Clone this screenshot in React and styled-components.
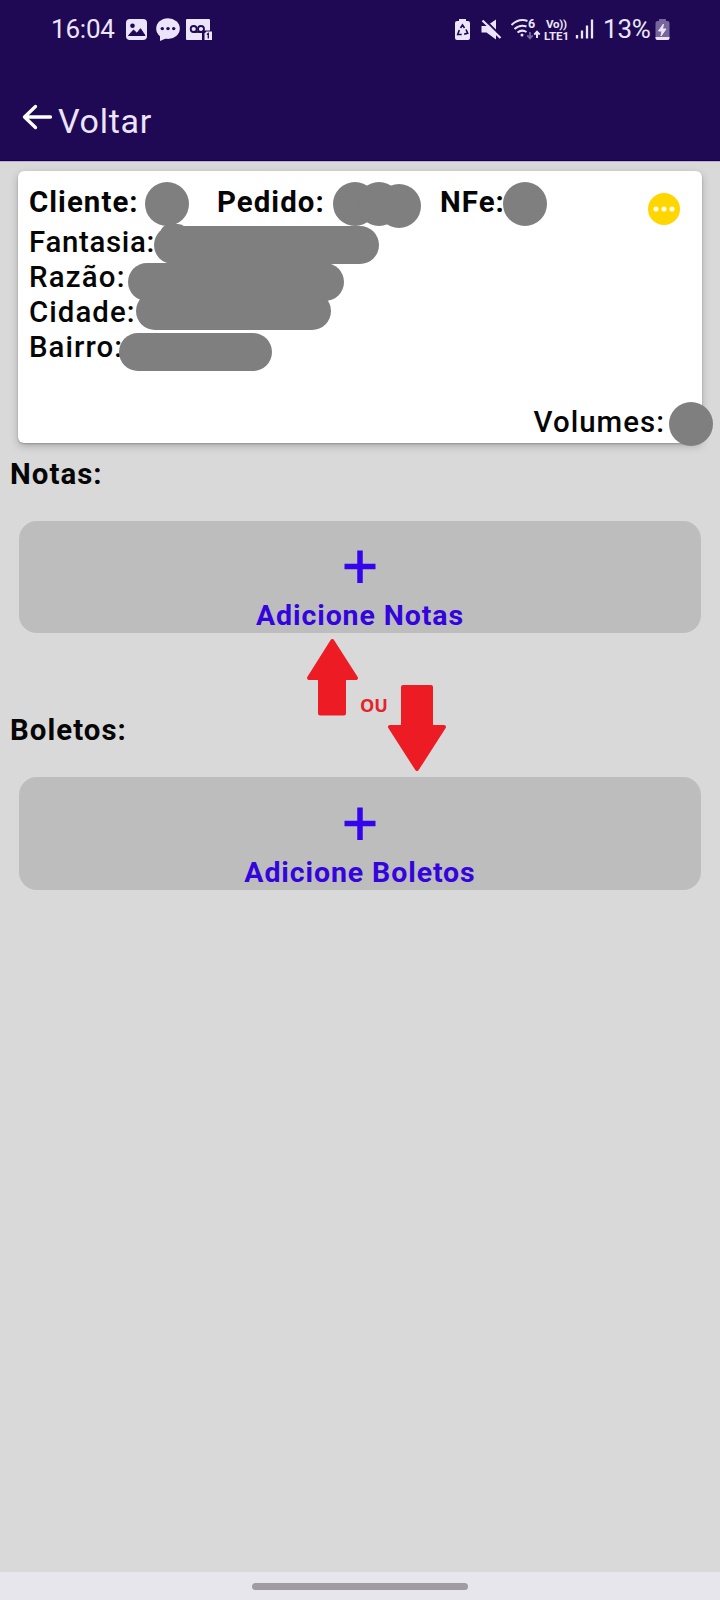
import React from 'react';
import styled, { createGlobalStyle } from 'styled-components';

const GlobalStyle = createGlobalStyle`
  * { box-sizing: border-box; }
  body { margin: 0; background: #d9d9d9; font-family: Roboto, sans-serif; }
`;

const Screen = styled.div`
  position: relative;
  width: 720px;
  height: 1600px;
  display: flex;
  flex-direction: column;
  overflow: hidden;
  background: #d9d9d9;
`;

const TopArea = styled.header`
  height: 161px;
  flex: none;
  background: #1f0954;
  border-bottom: 1px solid #13053a;
  box-shadow: 0 1px 0 #bcaedb;
  color: #ece4fa;
`;

const StatusBar = styled.div`
  height: 58px;
  padding: 0 49px 0 51px;
  display: flex;
  justify-content: space-between;
`;

const StatusGroup = styled.div`
  display: flex;
  align-items: flex-start;
`;

const StatusText = styled.span`
  width: ${(p) => p.$width}px;
  margin-top: 14px;
  font-size: 26px;
  line-height: 31px;
  white-space: nowrap;
  letter-spacing: ${(p) => p.$spacing || 0}px;
`;

const StatusIcon = styled.svg`
  display: block;
  flex: none;
  height: 58px;
`;

const BackBar = styled.div`
  height: 102px;
  padding: 40px 0 0 22px;
  display: flex;
`;

const BackIcon = styled.svg`
  display: block;
  width: 36px;
  height: 40px;
`;

const BackLabel = styled.span`
  font-size: 34px;
  line-height: 40px;
  padding-top: 3px;
  letter-spacing: 0.7px;
`;

const Card = styled.section`
  flex: none;
  width: 684px;
  height: 272px;
  margin: 10px 0 0 18px;
  padding: 14px 21px 3px 11px;
  display: flex;
  flex-direction: column;
  background: #fff;
  border-radius: 6px;
  box-shadow: 0 3px 9px rgba(0, 0, 0, 0.22), 0 1px 2px rgba(0, 0, 0, 0.2);
`;

const CardHead = styled.div`
  display: flex;
  height: 40px;
`;

const Label = styled.span`
  display: block;
  flex: none;
  width: ${(p) => (p.$width ? `${p.$width}px` : 'auto')};
  font-size: 29.4px;
  line-height: 35px;
  height: 35px;
  letter-spacing: ${(p) => p.$spacing ?? 1.05}px;
  font-weight: ${(p) => (p.$bold ? 700 : 500)};
  color: #060606;
  white-space: nowrap;
`;

const MoreIcon = styled.svg`
  display: block;
  width: 34px;
  height: 34px;
  margin: 7px 0 0 auto;
`;

const VolumeRow = styled.div`
  margin-top: auto;
  padding-right: 16px;
  display: flex;
  justify-content: flex-end;
`;

const Section = styled.section`
  flex: none;
  height: 256px;
  padding: 14px 19px 0 10px;
`;

const AddButton = styled.button`
  display: flex;
  flex-direction: column;
  align-items: center;
  width: 682px;
  height: ${(p) => 84 + p.$inset}px;
  margin: 29px 0 0 9px;
  padding: ${(p) => p.$inset}px 0 0;
  border: 0;
  border-radius: 18px;
  background: #bdbdbd;
  color: #3404dd;
  font: 700 28.5px/35px Roboto, sans-serif;
  letter-spacing: 0.9px;
`;

const PlusIcon = styled.svg`
  display: block;
  width: 34px;
  height: 34px;
  margin-bottom: 15px;
`;

const NavBar = styled.footer`
  margin-top: auto;
  height: 28px;
  flex: none;
  padding-top: 11px;
  background: #e7e6ed;
`;

const HomeHandle = styled.div`
  width: 216px;
  height: 7px;
  margin: 0 auto;
  border-radius: 4px;
  background: #9f9da3;
`;

const Mask = styled.div`
  position: absolute;
  left: ${(p) => p.$x}px;
  top: ${(p) => p.$y}px;
  width: ${(p) => p.$w}px;
  height: ${(p) => p.$h}px;
  border-radius: 22px;
  background: #7f7f7f;
`;

const Arrow = styled.svg`
  position: absolute;
  left: ${(p) => p.$x}px;
  top: ${(p) => p.$y}px;
  fill: #ed1c24;
  stroke: #ed1c24;
  stroke-width: 4;
  stroke-linejoin: round;
`;

const OrNote = styled.span`
  position: absolute;
  left: 360px;
  top: 693px;
  font: 700 18px/24px 'Open Sans', sans-serif;
  color: #e3242b;
`;

const masks = [
  [145, 182, 44, 44],
  [333, 182, 44, 44],
  [357, 182, 44, 44],
  [377, 184, 44, 44],
  [503, 182, 44, 44],
  [160, 224, 28, 20],
  [154, 226, 225, 38],
  [128, 263, 216, 38],
  [136, 292, 195, 38],
  [119, 333, 153, 38],
  [669, 402, 44, 44],
];

const LIGHT = '#ece4fa';
const DARK = '#1f0954';

function LeftStatus() {
  return (
    <StatusGroup>
      <StatusText $width={73} $spacing={-0.2}>16:04</StatusText>
      <StatusIcon width="90" viewBox="124 0 90 58">
        <rect x="126" y="19" width="21" height="21" rx="4" fill={LIGHT} />
        <circle cx="132.5" cy="25.7" r="2.3" fill={DARK} />
        <path d="M128.5 35.5l5-5.5 3.4 3.2 3.6-4.5 4.5 6.8z" fill={DARK} stroke={DARK} strokeLinejoin="round" />
        <ellipse cx="168" cy="28.6" rx="11.8" ry="10.3" fill={LIGHT} />
        <path d="M160 35v6l7-3z" fill={LIGHT} />
        <g fill={DARK}>
          <circle cx="162.3" cy="28.6" r="1.7" />
          <circle cx="168" cy="28.6" r="1.7" />
          <circle cx="173.7" cy="28.6" r="1.7" />
        </g>
        <rect x="186" y="19" width="24" height="21" rx="1" fill={LIGHT} />
        <g fill="none" stroke={DARK} strokeWidth="1.8">
          <circle cx="193.7" cy="29" r="3" />
          <circle cx="201" cy="29" r="3" />
          <path d="M193.7 32h10" />
        </g>
        <path d="M202 40V30.5h10V40z" fill={DARK} />
        <path d="M204.5 40v-6.5l2-2h5.5V40z" fill={LIGHT} />
        <path d="M206.8 34.500l1.500-1v5" fill="none" stroke={DARK} strokeWidth="1.3" />
      </StatusIcon>
    </StatusGroup>
  );
}

function RightStatus() {
  return (
    <StatusGroup>
      <StatusIcon width="150" viewBox="453 0 150 58">
        <path d="M457 21h2v-2h7v2h2q2 0 2 2v15q0 2-2 2h-11q-2 0-2-2V23q0-2 2-2z" fill={LIGHT} />
        <g fill="none" stroke={DARK} strokeWidth="1.6">
          <path d="M460.500 28l2-3 2 3M466 29.500l1.700 3.800-3.500.800M461.700 34.500h-4l1.600-4.500" />
        </g>
        <path d="M481.500 26h5l9.500-6.500v20l-9.500-7h-5z" fill={LIGHT} />
        <path d="M483.500 18.500l18.500 18.500" stroke={DARK} strokeWidth="2" />
        <path d="M482.500 20.500l18 17.500" stroke={LIGHT} strokeWidth="2.2" />
        <g fill="none" stroke={LIGHT} strokeWidth="2">
          <path d="M511.500 25q7.500-7 16-4" />
          <path d="M514.500 29q5.500-5 12-2.500" />
          <path d="M517.500 32.500q4.500-3.500 9-.500" />
        </g>
        <circle cx="522" cy="35" r="1.5" fill={LIGHT} />
        <text x="528" y="28" fontSize="12.5" fontWeight="700" fill={LIGHT}>6</text>
        <path d="M530 32v6m-2.700-2.700l2.700 3 2.700-3" fill="none" stroke="#77669c" strokeWidth="1.8" />
        <path d="M537 38v-6m-2.700 2.700l2.700-3 2.700 3" fill="none" stroke={LIGHT} strokeWidth="2" />
        <text x="546" y="28" fontSize="11.5" fontWeight="700" fill={LIGHT} textLength="21">Vo))</text>
        <text x="544" y="39.5" fontSize="11.5" fontWeight="700" fill={LIGHT} textLength="25">LTE1</text>
        <path d="M577 35v3.500M582 30.500v8M587 25.500v13M592 19.500v19" stroke={LIGHT} strokeWidth="2.3" />
      </StatusIcon>
      <StatusText $width={51} $spacing={-0.2}>13%</StatusText>
      <StatusIcon width="17" viewBox="654 0 17 58">
        <path d="M659 19h7v2h1.500q2 0 2 2v15q0 2-2 2h-10q-2 0-2-2V23q0-2 2-2H659z" fill="#77669c" />
        <path d="M655.500 37h14v1q0 2-2 2h-10q-2 0-2-2z" fill={LIGHT} />
        <path d="M663.500 24l-5 7h3.500l-1 5 5-7h-3.500z" fill={LIGHT} stroke={LIGHT} />
      </StatusIcon>
    </StatusGroup>
  );
}

function AddSection({ title, action, inset }) {
  return (
    <Section>
      <Label $bold>{title}</Label>
      <AddButton $inset={inset}>
        <PlusIcon viewBox="0 0 34 34">
          <path d="M1.500 17.500h31M17 1.500v32.500" stroke="#3404ee" strokeWidth="5.5" />
        </PlusIcon>
        {action}
      </AddButton>
    </Section>
  );
}

export default function App() {
  return (
    <Screen>
      <GlobalStyle />
      <TopArea>
        <StatusBar>
          <LeftStatus />
          <RightStatus />
        </StatusBar>
        <BackBar>
          <BackIcon viewBox="22 98 36 40">
            <path d="M50.500 117H24.500M35.500 106.500L24.500 117l11 10.500" fill="none" stroke="#fff" strokeWidth="3.3" strokeLinecap="round" strokeLinejoin="round" />
          </BackIcon>
          <BackLabel>Voltar</BackLabel>
        </BackBar>
      </TopArea>
      <Card>
        <CardHead>
          <Label $bold $width={188}>Cliente:</Label>
          <Label $bold $width={223}>Pedido:</Label>
          <Label $bold>NFe:</Label>
          <MoreIcon viewBox="0 0 34 34">
            <circle cx="17" cy="17" r="16" fill="#ffd600" />
            <g fill="#fffbe0">
              <circle cx="9" cy="17" r="2.6" />
              <circle cx="17" cy="17" r="2.6" />
              <circle cx="25" cy="17" r="2.6" />
            </g>
          </MoreIcon>
        </CardHead>
        <Label $spacing={0.7}>Fantasia:</Label>
        <Label $spacing={1.2}>Razão:</Label>
        <Label>Cidade:</Label>
        <Label>Bairro:</Label>
        <VolumeRow>
          <Label>Volumes:</Label>
        </VolumeRow>
      </Card>
      <AddSection title="Notas:" action="Adicione Notas" inset={28} />
      <AddSection title="Boletos:" action="Adicione Boletos" inset={29} />
      <NavBar>
        <HomeHandle />
      </NavBar>
      {masks.map(([x, y, w, h]) => (
        <Mask key={`${x}-${y}`} $x={x} $y={y} $w={w} $h={h} />
      ))}
      <Arrow $x={305} $y={637} width="56" height="80" viewBox="305 637 56 80">
        <path d="M332.300 641L356 678H344v35.500H320V678h-11z" />
      </Arrow>
      <OrNote>OU</OrNote>
      <Arrow $x={386} $y={683} width="62" height="90" viewBox="386 683 62 90">
        <path d="M403 687h28v40h13l-27 42-27-42h13z" />
      </Arrow>
    </Screen>
  );
}
